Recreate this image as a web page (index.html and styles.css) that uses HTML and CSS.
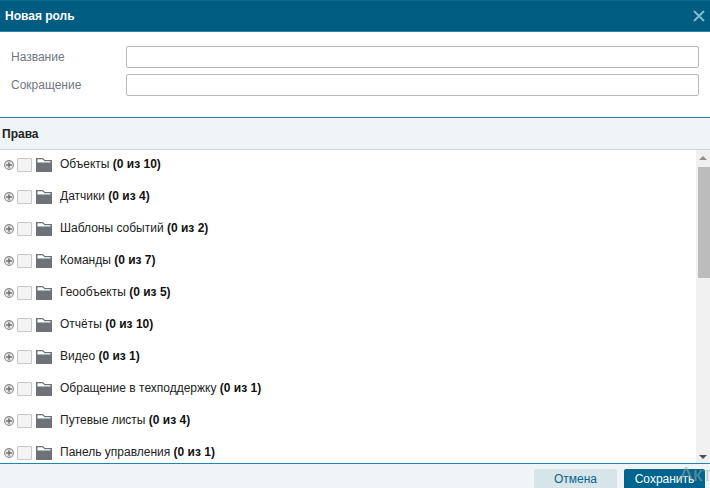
FILE: index.html
```html
<!DOCTYPE html>
<html lang="ru">
<head>
    <meta charset="UTF-8">
    <title>Новая роль</title>
    <link rel="stylesheet" href="styles.css">
</head>
<body>
    <svg class="defs" width="0" height="0">
        <symbol id="plus" viewBox="0 0 10 10">
            <circle cx="5" cy="5" r="4.4" fill="#e8e8e8" stroke="#8a8a8a" stroke-width="1.1"/>
            <path d="M2.2 5h5.6M5 2.2v5.6" stroke="#6a6a6a" stroke-width="1.3"/>
        </symbol>
        <symbol id="folder" viewBox="0 0 16 14">
            <path d="M0 0h7l2 2h7v12H0z" fill="#6d7278"/>
            <path d="M1.5 1.2h5l2 2h6v1.4H1.5z" fill="#fff"/>
        </symbol>
    </svg>

    <div class="dialog">
        <!-- Header -->
        <header class="dialog-head">
            <h1>Новая роль</h1>
            <svg class="close" width="12" height="12" viewBox="0 0 12 12">
                <path d="M1 1l10 10M11 1L1 11" stroke="#7fbad0" stroke-width="2"/>
            </svg>
        </header>

        <!-- Form -->
        <div class="form">
            <div class="form-row">
                <label>Название</label>
                <input type="text">
            </div>
            <div class="form-row">
                <label>Сокращение</label>
                <input type="text">
            </div>
        </div>

        <div class="rights-head">Права</div>

        <!-- Tree -->
        <div class="tree-wrap">
            <ul class="tree">
                <li><svg class="plus"><use href="#plus"/></svg><span class="check"></span><svg class="folder"><use href="#folder"/></svg><span class="label">Объекты <b>(0 из 10)</b></span></li>
                <li><svg class="plus"><use href="#plus"/></svg><span class="check"></span><svg class="folder"><use href="#folder"/></svg><span class="label">Датчики <b>(0 из 4)</b></span></li>
                <li><svg class="plus"><use href="#plus"/></svg><span class="check"></span><svg class="folder"><use href="#folder"/></svg><span class="label">Шаблоны событий <b>(0 из 2)</b></span></li>
                <li><svg class="plus"><use href="#plus"/></svg><span class="check"></span><svg class="folder"><use href="#folder"/></svg><span class="label">Команды <b>(0 из 7)</b></span></li>
                <li><svg class="plus"><use href="#plus"/></svg><span class="check"></span><svg class="folder"><use href="#folder"/></svg><span class="label">Геообъекты <b>(0 из 5)</b></span></li>
                <li><svg class="plus"><use href="#plus"/></svg><span class="check"></span><svg class="folder"><use href="#folder"/></svg><span class="label">Отчёты <b>(0 из 10)</b></span></li>
                <li><svg class="plus"><use href="#plus"/></svg><span class="check"></span><svg class="folder"><use href="#folder"/></svg><span class="label">Видео <b>(0 из 1)</b></span></li>
                <li><svg class="plus"><use href="#plus"/></svg><span class="check"></span><svg class="folder"><use href="#folder"/></svg><span class="label">Обращение в техподдержку <b>(0 из 1)</b></span></li>
                <li><svg class="plus"><use href="#plus"/></svg><span class="check"></span><svg class="folder"><use href="#folder"/></svg><span class="label">Путевые листы <b>(0 из 4)</b></span></li>
                <li><svg class="plus"><use href="#plus"/></svg><span class="check"></span><svg class="folder"><use href="#folder"/></svg><span class="label">Панель управления <b>(0 из 1)</b></span></li>
            </ul>
            <div class="scrollbar">
                <span class="arrow-up"></span>
                <div class="track"><div class="thumb"></div></div>
                <span class="arrow-down"></span>
            </div>
        </div>

        <!-- Footer -->
        <footer class="dialog-foot">
            <button class="btn btn-cancel">Отмена</button>
            <button class="btn btn-save">Сохранить</button>
        </footer>
    </div>

    <div class="watermark">Акт</div>
</body>
</html>
```

FILE: styles.css
```css
body {
    font-family: "Liberation Sans", Arial, sans-serif;
    margin: 0;
    padding: 0;
    background: #fff;
    color: #222;
    overflow: hidden;
}

.defs {
    position: absolute;
}

.dialog {
    display: flex;
    flex-direction: column;
    width: 710px;
    height: 488px;
    overflow: hidden;
}

.dialog-head {
    display: flex;
    justify-content: space-between;
    align-items: center;
    height: 32px;
    box-sizing: border-box;
    padding: 0 5px 1px 5px;
    background-color: #005c80;
    border-top: 1px solid #10698b;
    border-bottom: 1px solid #2a86a8;
    flex: none;
}

.dialog-head h1 {
    margin: 0;
    font-size: 12px;
    font-weight: bold;
    color: #fff;
}

.form {
    flex: none;
    height: 85px;
    box-sizing: border-box;
    padding: 14px 11px 0 11px;
    display: flex;
    flex-direction: column;
    gap: 6px;
}

.form-row {
    display: flex;
    align-items: center;
}

.form-row label {
    width: 115px;
    flex: none;
    font-size: 12px;
    color: #6f7780;
}

.form-row input {
    flex: 1;
    height: 22px;
    box-sizing: border-box;
    border: 1px solid #b9b9b9;
    border-radius: 2px;
    background: #fff;
    padding: 0;
}

.rights-head {
    flex: none;
    height: 33px;
    box-sizing: border-box;
    padding: 0 2px;
    display: flex;
    align-items: center;
    background-color: #eff4f7;
    border-top: 1px solid #2a7da0;
    border-bottom: 1px solid #cfd3d6;
    font-size: 12px;
    font-weight: bold;
    color: #222;
}

.tree-wrap {
    flex: none;
    height: 313px;
    display: flex;
    overflow: hidden;
}

.tree {
    flex: 1;
    list-style: none;
    margin: 0;
    padding: 0;
}

.tree li {
    display: flex;
    align-items: center;
    height: 32px;
    box-sizing: border-box;
    padding: 0 0 2px 4px;
    font-size: 12px;
    color: #222;
}

.tree li b {
    color: #111;
}

.label {
    position: relative;
    top: -1px;
}

.plus {
    width: 10px;
    height: 10px;
    margin-right: 1px;
    flex: none;
}

.check {
    width: 13px;
    height: 12px;
    margin-left: 2px;
    flex: none;
    background: #f3f3f3;
    border: 1px solid #c8c8c8;
    border-radius: 1px;
}

.folder {
    width: 16px;
    height: 14px;
    margin: 0 8px 0 4px;
    flex: none;
}

.scrollbar {
    width: 14px;
    flex: none;
    display: flex;
    flex-direction: column;
    align-items: flex-end;
    background-color: #f0f0f0;
}

.arrow-up,
.arrow-down {
    display: block;
    flex: none;
    width: 0;
    margin: 0 3px 0 0;
    border-left: 4px solid transparent;
    border-right: 4px solid transparent;
}

.arrow-up {
    margin-top: 6px;
    border-bottom: 4px solid #8f8f8f;
}

.arrow-down {
    margin-bottom: 4px;
    border-top: 4px solid #505050;
}

.track {
    flex: 1;
    width: 12px;
    padding-top: 7px;
}

.thumb {
    height: 111px;
    background-color: #bcbcbc;
}

.dialog-foot {
    flex: 1;
    display: flex;
    justify-content: flex-end;
    align-items: flex-end;
    gap: 7px;
    padding-right: 5px;
    background-color: #eff4f7;
    border-top: 1px solid #1f86b0;
}

.btn {
    height: 19px;
    padding: 0;
    border: 0;
    border-radius: 2px 2px 0 0;
    font-family: inherit;
    font-size: 12px;
}

.btn-cancel {
    width: 83px;
    background-color: #d7e4ea;
    color: #0a6488;
}

.btn-save {
    width: 81px;
    background-color: #00658e;
    color: #fff;
}

.watermark {
    position: absolute;
    left: 679px;
    top: 462px;
    font-size: 21px;
    color: rgba(170, 170, 170, 0.55);
    white-space: nowrap;
}
```
